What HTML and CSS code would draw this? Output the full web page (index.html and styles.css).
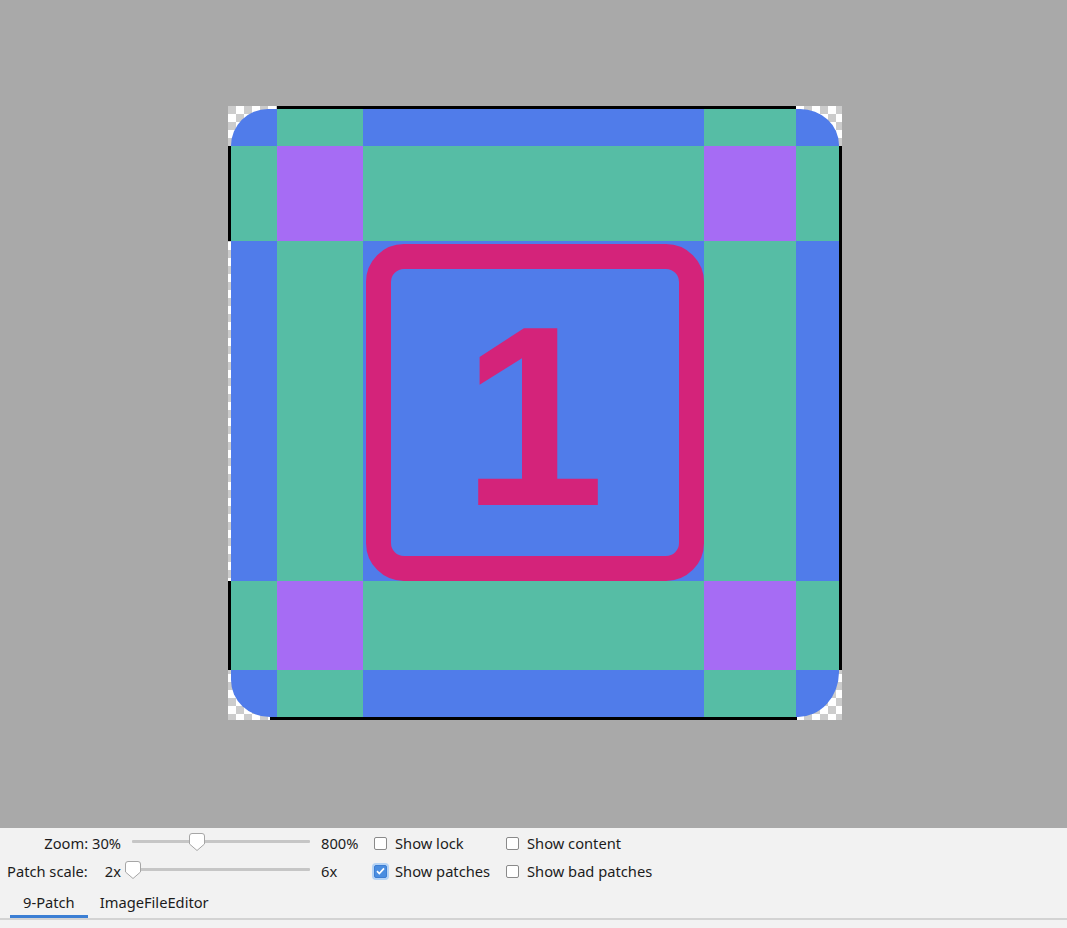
FILE: index.html
```html
<!DOCTYPE html>
<html>
<head>
<meta charset="utf-8">
<title>9-Patch</title>
<link rel="stylesheet" href="styles.css">
</head>
<body>
<div class="canvas">
  <div class="np">
    <div class="edge edge-top"></div>
    <div class="edge edge-left"></div>
    <div class="cells">
      <div class="c b tl"></div><div class="c g"></div><div class="c b"></div><div class="c g"></div><div class="c b tr"></div>
      <div class="c g"></div><div class="c p"></div><div class="c g"></div><div class="c p"></div><div class="c g"></div>
      <div class="c b"></div><div class="c g"></div>
      <div class="c b mid"><div class="badge"><svg class="num-svg" viewBox="0 0 288 287"><text class="num-text" x="142.5" y="236" text-anchor="middle">1</text></svg></div></div>
      <div class="c g"></div><div class="c b"></div>
      <div class="c g"></div><div class="c p"></div><div class="c g"></div><div class="c p"></div><div class="c g"></div>
      <div class="c b bl"></div><div class="c g"></div><div class="c b"></div><div class="c g"></div><div class="c b br"></div>
    </div>
    <div class="edge edge-right"></div>
    <div class="edge edge-bottom"></div>
  </div>
</div>
<div class="panel">
  <div class="controls">
    <div class="lbl">Zoom: 30%</div>
    <div class="slider">
      <div class="track"></div>
      <svg class="thumb thumb-zoom" viewBox="0 0 16 18"><path d="M3 .5h10a2.5 2.5 0 0 1 2.5 2.5v8L8 17.5.5 11V3A2.5 2.5 0 0 1 3 .5z" fill="#fff" stroke="#a6a6a6"/></svg>
    </div>
    <div class="max">800%</div>
    <div class="cb"><span class="box"></span>Show lock</div>
    <div class="cb"><span class="box"></span>Show content</div>

    <div class="lbl lbl-split"><span>Patch scale:</span><span>2x</span></div>
    <div class="slider">
      <div class="track"></div>
      <svg class="thumb thumb-scale" viewBox="0 0 16 18"><path d="M3 .5h10a2.5 2.5 0 0 1 2.5 2.5v8L8 17.5.5 11V3A2.5 2.5 0 0 1 3 .5z" fill="#fff" stroke="#a6a6a6"/></svg>
    </div>
    <div class="max">6x</div>
    <div class="cb"><span class="box checked"><svg class="check" viewBox="0 0 9 8"><path d="M1 4.2l2.3 2.3L8 1.4" fill="none" stroke="#fff" stroke-width="1.7"/></svg></span>Show patches</div>
    <div class="cb"><span class="box"></span>Show bad patches</div>
  </div>
  <div class="tabs">
    <div class="tab active">9-Patch</div>
    <div class="tab">ImageFileEditor</div>
  </div>
</div>
</body>
</html>
```
FILE: styles.css
```css
* { box-sizing: border-box; }
html, body { margin: 0; padding: 0; }
body {
  width: 1067px;
  height: 928px;
  overflow: hidden;
  font-family: "Noto Sans", "Open Sans", sans-serif;
  background: #f2f2f2;
}
.canvas {
  height: 828px;
  background: #a9a9a9;
  display: flex;
  align-items: center;
  justify-content: center;
}
.np {
  width: 614px;
  height: 614px;
  margin: 0 0 2px 3px;
  display: grid;
  grid-template-columns: 3px 608px 3px;
  grid-template-rows: 3px 608px 3px;
  background: conic-gradient(#fff 25%, #cccccc 0 50%, #fff 0 75%, #cccccc 0) 0 0 / 16px 16px;
}
.edge-top {
  grid-column: 1 / 4;
  grid-row: 1;
  background: linear-gradient(to right, transparent 49px, #000 49px 568px, transparent 568px);
}
.edge-bottom {
  grid-column: 1 / 4;
  grid-row: 3;
  background: linear-gradient(to right, transparent 42px, #000 42px 569px, transparent 569px);
}
.edge-left {
  grid-column: 1;
  grid-row: 2;
  background: linear-gradient(to bottom, transparent 37px, #000 37px 132px, transparent 132px 472px, #000 472px 561px, transparent 561px);
}
.edge-right {
  grid-column: 3;
  grid-row: 2;
  background: linear-gradient(to bottom, transparent 37px, #000 37px 561px, transparent 561px);
}
.cells {
  grid-column: 2;
  grid-row: 2;
  display: grid;
  grid-template-columns: 46px 86px 341px 92px 43px;
  grid-template-rows: 37px 95px 340px 89px 47px;
}
.b { background: #507cea; }
.g { background: #56bda5; }
.p { background: #a66cf4; }
.tl { border-top-left-radius: 37px 37px; }
.tr { border-top-right-radius: 39px 36px; }
.bl { border-bottom-left-radius: 39px 37px; }
.br { border-bottom-right-radius: 41px 45px; }
.mid {
  padding: 3px 0 0 3px;
  display: flex;
}
.badge {
  flex: 1;
  border: 25px solid #d4237a;
  border-radius: 38px;
  display: flex;
}
.num-svg {
  display: block;
  flex: 1;
  width: 288px;
  height: 287px;
}
.num-text {
  font-family: "Liberation Sans", Arial, sans-serif;
  font-weight: 700;
  font-size: 257px;
  fill: #d4237a;
}

.panel {
  height: 100px;
  background: #f2f2f2;
  padding-top: 1px;
  color: #1c1c1c;
  font-size: 14.7px;
}
.controls {
  display: grid;
  grid-template-columns: 125px 190px 53px 132px 1fr;
  grid-template-rows: 28px 28px;
  line-height: 28px;
}
.lbl {
  text-align: right;
  padding-right: 4px;
  white-space: nowrap;
}
.lbl-split {
  display: flex;
  justify-content: space-between;
  padding-left: 7px;
}
.slider { position: relative; }
.track {
  height: 3px;
  margin: 11px 5px 0 7px;
  background: #c6c6c6;
  border-radius: 1px;
}
.thumb {
  position: absolute;
  top: 4px;
  width: 16px;
  height: 18px;
}
.thumb-zoom { left: 64px; }
.thumb-scale { left: 0; }
.max { padding-left: 6px; }
.cb {
  display: flex;
  align-items: center;
  padding-left: 6px;
  white-space: nowrap;
}
.box {
  width: 13px;
  height: 13px;
  border: 1px solid #8a8a8a;
  border-radius: 2px;
  background: #fff;
  margin-right: 8px;
  flex: none;
}
.box.checked {
  background: #4a8de0;
  border-color: #3d7ed3;
  box-shadow: 0 0 0 2px #b5d3f5;
  display: flex;
  align-items: center;
  justify-content: center;
}
.check { width: 9px; height: 8px; display: block; }
.tabs {
  display: flex;
  padding-left: 10px;
  border-bottom: 2px solid #d3d3d3;
}
.tab {
  height: 33px;
  padding: 7px 13px 0;
  line-height: 21px;
  white-space: nowrap;
}
.tab + .tab { padding-left: 12px; }
.tab.active { border-bottom: 3px solid #3c7fd4; }
```
